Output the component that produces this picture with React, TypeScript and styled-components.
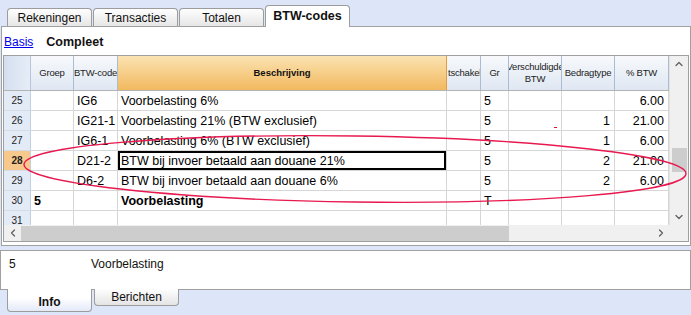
import styled, { createGlobalStyle, css } from 'styled-components';
import { ChevronUp, ChevronDown, ChevronLeft, ChevronRight } from 'lucide-react';

const GlobalStyle = createGlobalStyle`
	body {
		margin: 0;
		background: #dce6f8;
		font-family: 'Liberation Sans', Arial, sans-serif;
	}
`;

type Row = {
	n: number;
	groep?: string;
	code?: string;
	desc?: string;
	gr?: string;
	type?: string;
	pct?: string;
	bold?: boolean;
	current?: boolean;
	mark?: boolean;
};

const rows: Row[] = [
	{ n: 25, code: 'IG6', desc: 'Voorbelasting 6%', gr: '5', pct: '6.00' },
	{ n: 26, code: 'IG21-1', desc: 'Voorbelasting 21% (BTW exclusief)', gr: '5', type: '1', pct: '21.00', mark: true },
	{ n: 27, code: 'IG6-1', desc: 'Voorbelasting 6% (BTW exclusief)', gr: '5', type: '1', pct: '6.00' },
	{ n: 28, code: 'D21-2', desc: 'BTW bij invoer betaald aan douane 21%', gr: '5', type: '2', pct: '21.00', current: true },
	{ n: 29, code: 'D6-2', desc: 'BTW bij invoer betaald aan douane 6%', gr: '5', type: '2', pct: '6.00' },
	{ n: 30, groep: '5', desc: 'Voorbelasting', gr: 'T', bold: true },
	{ n: 31 },
];

const COLS = '27px 43px 44px 329px 34px 28px 53px 53px 54px';

const App = () => (
	<Screen>
		<GlobalStyle />
		<TabBar>
			<Tab>Rekeningen</Tab>
			<Tab>Transacties</Tab>
			<Tab>Totalen</Tab>
			<Tab $active>BTW-codes</Tab>
		</TabBar>
		<Panel>
			<Toolbar>
				<ViewLink href="#">Basis</ViewLink>
				<ViewName>Compleet</ViewName>
			</Toolbar>
			<Grid>
				<GridMain>
					<TableArea>
						<HeaderRow>
							<Corner />
							<HeadCell>Groep</HeadCell>
							<HeadCell>BTW-code</HeadCell>
							<HeadCell $focus>Beschrijving</HeadCell>
							<HeadCell $start>tschakel</HeadCell>
							<HeadCell>Gr</HeadCell>
							<HeadCell>Verschuldigde<br />BTW</HeadCell>
							<HeadCell>Bedragtype</HeadCell>
							<HeadCell>% BTW</HeadCell>
						</HeaderRow>
						{rows.map((r) => (
							<DataRow key={r.n}>
								<RowNum $current={r.current}>{r.n}</RowNum>
								<Cell $bold={r.bold}>{r.groep}</Cell>
								<Cell>{r.code}</Cell>
								<Cell $bold={r.bold} $selected={r.current}>{r.desc}</Cell>
								<Cell />
								<Cell>{r.gr}</Cell>
								<Cell>{r.mark && <RedMark />}</Cell>
								<Cell $right>{r.type}</Cell>
								<Cell $right>{r.pct}</Cell>
							</DataRow>
						))}
					</TableArea>
					<VScroll>
						<ScrollArrow><ChevronUp size={12} strokeWidth={2.5} /></ScrollArrow>
						<VTrack>
							<VThumb />
						</VTrack>
						<ScrollArrow><ChevronDown size={12} strokeWidth={2.5} /></ScrollArrow>
					</VScroll>
				</GridMain>
				<HScroll>
					<ScrollArrow><ChevronLeft size={12} strokeWidth={2.5} /></ScrollArrow>
					<HTrack>
						<HThumb />
					</HTrack>
					<ScrollArrow><ChevronRight size={12} strokeWidth={2.5} /></ScrollArrow>
					<ScrollCorner />
				</HScroll>
			</Grid>
		</Panel>
		<InfoPanel>
			<InfoKey>5</InfoKey>
			<InfoText>Voorbelasting</InfoText>
		</InfoPanel>
		<BottomTabs>
			<BottomTab $active>Info</BottomTab>
			<BottomTab>Berichten</BottomTab>
		</BottomTabs>
		<Annotation viewBox="0 0 691 315" width="691" height="315">
			<ellipse cx="355" cy="169" rx="331" ry="33" transform="rotate(0.8 355 169)" fill="none" stroke="#e8194f" strokeWidth="1.4" />
		</Annotation>
	</Screen>
);

export default App;

// Styled Components
const Screen = styled.div`
	position: relative;
	width: 691px;
	height: 315px;
	overflow: hidden;
	background: #dce6f8;
`;

const TabBar = styled.div`
	display: flex;
	align-items: flex-end;
	gap: 1px;
	height: 26px;
	padding-left: 7px;
	box-sizing: border-box;
	position: relative;
	z-index: 1;
`;

const Tab = styled.div<{ $active?: boolean }>`
	width: 85px;
	height: 18px;
	box-sizing: border-box;
	border: 1px solid #9c9c9c;
	border-bottom: none;
	border-radius: 4px 4px 0 0;
	background: linear-gradient(#fefefe, #e6e6e6);
	display: flex;
	align-items: center;
	justify-content: center;
	font-size: 12px;
	color: #111;
	${(p) =>
		p.$active &&
		css`
			height: 22px;
			margin-bottom: -1px;
			background: #fff;
			font-weight: bold;
			font-size: 12.5px;
			padding-bottom: 2px;
		`}
`;

const Panel = styled.div`
	margin: 0 0 0 1px;
	width: 690px;
	height: 220px;
	box-sizing: border-box;
	border: 1px solid #a0a0a0;
	background: #fff;
	padding: 0 1px;
	display: flex;
	flex-direction: column;
`;

const Toolbar = styled.div`
	height: 28px;
	display: flex;
	align-items: center;
	gap: 13px;
	padding: 2px 0 0 1px;
	box-sizing: border-box;
`;

const ViewLink = styled.a`
	color: #0000ee;
	font-size: 12px;
	text-decoration: underline;
`;

const ViewName = styled.span`
	font-size: 12.5px;
	font-weight: bold;
	color: #111;
`;

const Grid = styled.div`
	width: 686px;
	height: 187px;
	box-sizing: border-box;
	border: 1px solid #a0a0a0;
	display: flex;
	flex-direction: column;
`;

const GridMain = styled.div`
	display: flex;
	height: 169px;
`;

const TableArea = styled.div`
	width: 665px;
	overflow: hidden;
`;

const HeaderRow = styled.div`
	display: grid;
	grid-template-columns: ${COLS};
	height: 35px;
	border-bottom: 1px solid #b4b4b4;
	box-sizing: border-box;
`;

const Corner = styled.div`
	background: linear-gradient(90deg, #d4dfef, #e6edf7);
	border-right: 1px solid #b7c6da;
`;

const HeadCell = styled.div<{ $focus?: boolean; $start?: boolean }>`
	background: linear-gradient(#f7f9fc, #dfe7f2);
	border-right: 1px solid #aabbd3;
	display: flex;
	align-items: center;
	justify-content: ${(p) => (p.$start ? 'flex-start' : 'center')};
	padding-left: ${(p) => (p.$start ? '1px' : '0')};
	text-align: center;
	font-size: 9.5px;
	letter-spacing: -0.2px;
	line-height: 12px;
	color: #222;
	overflow: hidden;
	white-space: nowrap;
	${(p) =>
		p.$focus &&
		css`
			background: linear-gradient(#fbe3b2, #f2b95f);
			border-right-color: #e99a3a;
			font-weight: bold;
			letter-spacing: 0;
			color: #111;
		`}
`;

const DataRow = styled.div`
	display: grid;
	grid-template-columns: ${COLS};
	height: 20px;
`;

const RowNum = styled.div<{ $current?: boolean }>`
	background: #e3ebf7;
	border-right: 1px solid #c3d0e2;
	border-bottom: 1px solid #d6dce6;
	display: flex;
	align-items: center;
	justify-content: center;
	font-size: 10px;
	color: #222;
	${(p) =>
		p.$current &&
		css`
			background: #f8c98c;
			font-weight: bold;
		`}
`;

const Cell = styled.div<{ $right?: boolean; $bold?: boolean; $selected?: boolean }>`
	position: relative;
	border-right: 1px solid #d6d6d6;
	border-bottom: 1px solid #d6d6d6;
	display: flex;
	align-items: center;
	justify-content: ${(p) => (p.$right ? 'flex-end' : 'flex-start')};
	padding: 0 ${(p) => (p.$right ? '4px' : '3px')};
	font-size: 12.5px;
	font-weight: ${(p) => (p.$bold ? 'bold' : 'normal')};
	color: #000;
	white-space: nowrap;
	overflow: hidden;
	${(p) =>
		p.$selected &&
		css`
			box-shadow: inset 0 0 0 2px #000;
		`}
`;

const RedMark = styled.span`
	position: absolute;
	left: 45px;
	top: 16px;
	width: 3px;
	height: 1px;
	background: #e0102c;
`;

const VScroll = styled.div`
	width: 19px;
	background: #f0f0f0;
	border-left: 1px solid #e2e2e2;
	box-sizing: border-box;
	display: flex;
	flex-direction: column;
`;

const ScrollArrow = styled.div`
	width: 17px;
	height: 16px;
	display: flex;
	align-items: center;
	justify-content: center;
	color: #606060;
	flex-shrink: 0;
`;

const VTrack = styled.div`
	flex: 1;
	padding-top: 76px;
`;

const VThumb = styled.div`
	height: 24px;
	margin: 0 1px 0 2px;
	background: #cdcdcd;
`;

const HScroll = styled.div`
	height: 16px;
	background: #f0f0f0;
	display: flex;
	align-items: center;
`;

const HTrack = styled.div`
	flex: 1;
	height: 100%;
	display: flex;
	align-items: center;
`;

const HThumb = styled.div`
	width: 488px;
	height: 15px;
	background: #cdcdcd;
`;

const ScrollCorner = styled.div`
	width: 19px;
	height: 100%;
`;

const InfoPanel = styled.div`
	margin-top: 4px;
	width: 691px;
	height: 40px;
	box-sizing: border-box;
	border: 1px solid #a0a0a0;
	background: #fff;
	display: flex;
	align-items: flex-start;
	padding: 6px 0 0 8px;
	font-size: 12px;
	color: #111;
`;

const InfoKey = styled.span`
	width: 82px;
`;

const InfoText = styled.span``;

const BottomTabs = styled.div`
	display: flex;
	align-items: flex-start;
	gap: 2px;
	padding-left: 7px;
	margin-top: -1px;
	position: relative;
`;

const BottomTab = styled.div<{ $active?: boolean }>`
	width: 85px;
	height: 17px;
	box-sizing: border-box;
	border: 1px solid #9c9c9c;
	border-top: none;
	border-radius: 0 0 4px 4px;
	background: linear-gradient(#fefefe, #e4e4e4);
	display: flex;
	align-items: center;
	justify-content: center;
	font-size: 12px;
	color: #111;
	${(p) =>
		p.$active &&
		css`
			height: 23px;
			padding-top: 3px;
			background: linear-gradient(#fff 40%, #e3e9f8);
			font-weight: bold;
		`}
`;

const Annotation = styled.svg`
	position: absolute;
	left: 0;
	top: 0;
	pointer-events: none;
`;
